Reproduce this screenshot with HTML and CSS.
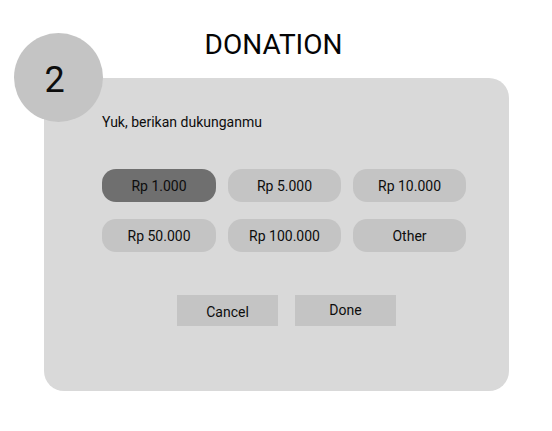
FILE: index.html
```html
<!DOCTYPE html>
<html lang="id">
<head>
    <meta charset="UTF-8">
    <meta name="viewport" content="width=device-width, initial-scale=1.0">
    <title>Donation</title>
    <link rel="stylesheet" href="styles.css">
</head>
<body>
    <div class="page">
        <h1 class="title">DONATION</h1>

        <div class="card">
            <div class="step">2</div>

            <p class="prompt">Yuk, berikan dukunganmu</p>

            <div class="amounts">
                <button class="amount selected">Rp 1.000</button>
                <button class="amount">Rp 5.000</button>
                <button class="amount">Rp 10.000</button>
                <button class="amount">Rp 50.000</button>
                <button class="amount">Rp 100.000</button>
                <button class="amount">Other</button>
            </div>

            <div class="actions">
                <button class="action">Cancel</button>
                <button class="action done">Done</button>
            </div>
        </div>
    </div>
</body>
</html>
```

FILE: styles.css
```css
* {
    box-sizing: border-box;
    font-family: Roboto, 'Liberation Sans', sans-serif;
}

body {
    background: #ffffff;
    margin: 0;
    color: #0d0d0d;
}

.page {
    padding: 28px 43px 0 44px;
}

.title {
    margin: 0 0 17px;
    padding-right: 6px;
    font-size: 28px;
    font-weight: 400;
    line-height: 33px;
    text-align: center;
    color: #050505;
}

.card {
    position: relative;
    width: 465px;
    height: 313px;
    background: #d9d9d9;
    border-radius: 20px;
    padding: 34px 0 0 58px;
}

.step {
    position: absolute;
    left: -30px;
    top: -45px;
    width: 89px;
    height: 89px;
    border-radius: 50%;
    background: #c4c4c4;
    display: flex;
    align-items: center;
    justify-content: center;
    padding: 4px 8px 0 0;
    font-size: 36px;
    color: #0d0d0d;
}

.prompt {
    margin: 0 0 37px;
    font-size: 14px;
    line-height: 20px;
}

.amounts {
    display: grid;
    grid-template-columns: 114px 113px 113px;
    column-gap: 12px;
    row-gap: 17px;
}

button {
    border: none;
    cursor: pointer;
    font-size: 14px;
    color: #0d0d0d;
    padding: 0;
}

.amount {
    height: 33px;
    border-radius: 14px;
    background: #c4c4c4;
}

.amount.selected {
    background: #6f6f6f;
}

.actions {
    display: flex;
    gap: 17px;
    margin: 43px 0 0 75px;
}

.action {
    width: 101px;
    height: 31px;
    background: #c4c4c4;
    padding-top: 2px;
}

.action.done {
    padding: 0 0 1px;
}
```
